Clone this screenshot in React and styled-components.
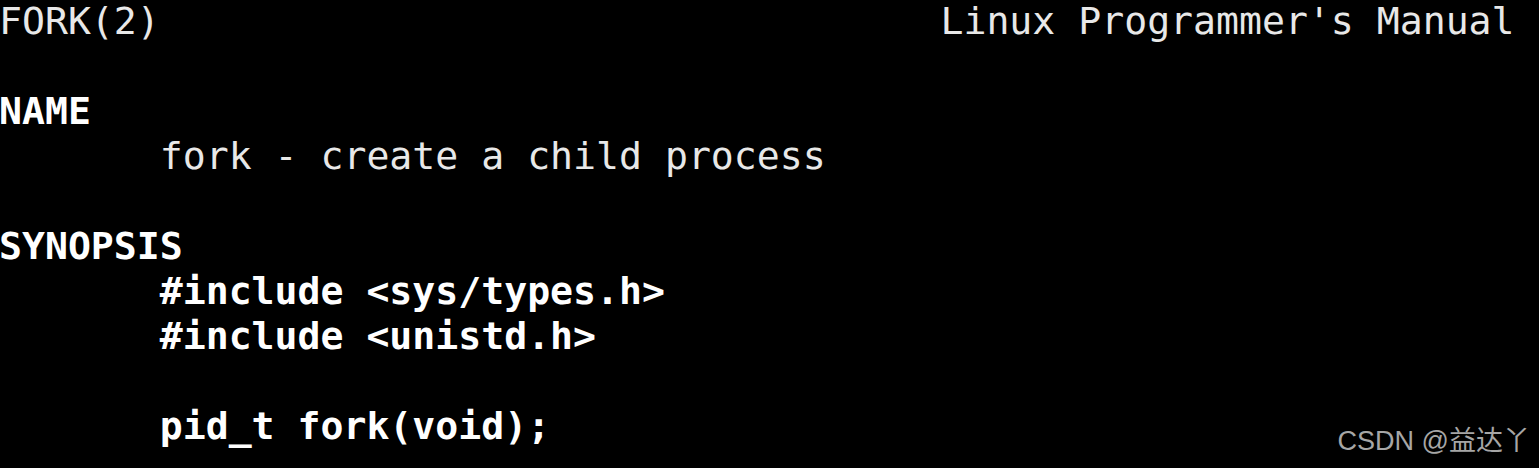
import styled, { createGlobalStyle } from "styled-components";

const Global = createGlobalStyle`
  html, body {
    margin: 0;
    padding: 0;
    background: #000;
  }
`;

const Screen = styled.main`
  position: relative;
  width: 1539px;
  height: 468px;
  overflow: hidden;
  background: #000;
  font-family: "DejaVu Sans Mono", "Liberation Mono", monospace;
  font-size: 38.15px;
  line-height: 45px;
  color: #e8e8e8;
`;

const Line = styled.div`
  height: 45px;
  white-space: pre;
  margin: -1px 0 1px -1px;
  font-weight: ${(p) => (p.$bold ? 700 : 400)};
  color: ${(p) => (p.$bold ? "#ffffff" : "#e8e8e8")};
`;

const Watermark = styled.div`
  position: absolute;
  right: 9px;
  bottom: 12px;
  font-family: "Liberation Sans", "Noto Sans CJK SC", sans-serif;
  font-size: 27px;
  line-height: 30px;
  color: #a6a6a6;
  white-space: nowrap;
`;

const lines = [
  { text: "FORK(2)" + " ".repeat(34) + "Linux Programmer's Manual" },
  { text: "" },
  { text: "NAME", bold: true },
  { text: "       fork - create a child process" },
  { text: "" },
  { text: "SYNOPSIS", bold: true },
  { text: "       #include <sys/types.h>", bold: true },
  { text: "       #include <unistd.h>", bold: true },
  { text: "" },
  { text: "       pid_t fork(void);", bold: true },
];

export default function App() {
  return (
    <>
      <Global />
      <Screen>
        {lines.map((l, i) => (
          <Line key={i} $bold={l.bold}>
            {l.text}
          </Line>
        ))}
        <Watermark>CSDN @益达丫</Watermark>
      </Screen>
    </>
  );
}
